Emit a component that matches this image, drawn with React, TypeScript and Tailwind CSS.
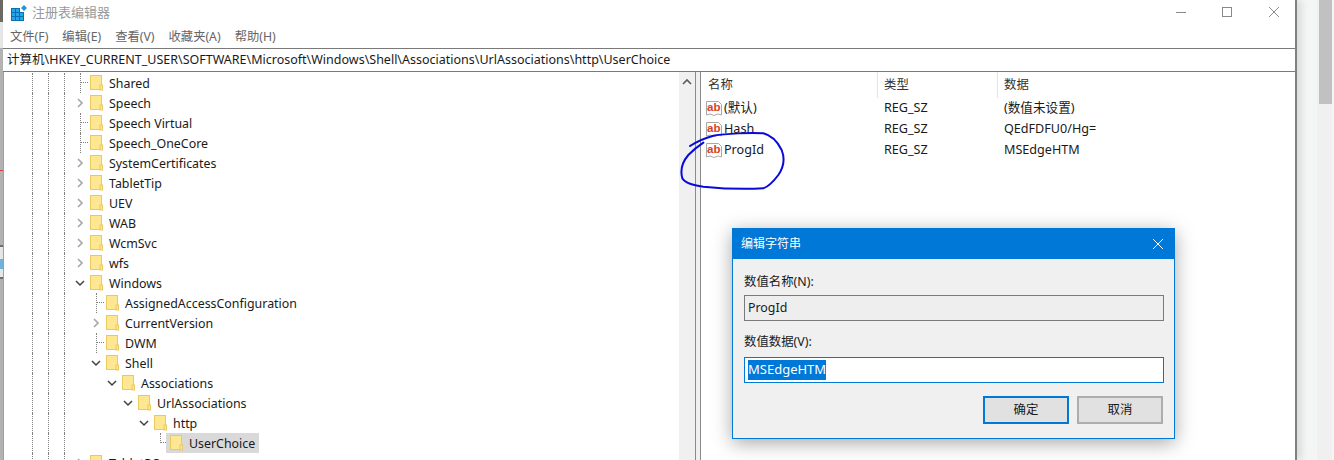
const F = '"Noto Sans","Noto Sans CJK SC",sans-serif';

type Row = { t: string; g: number[]; e?: 'r' | 'd' | 'n' | 'l'; sel?: boolean };

const rows: Row[] = [
  { t: 'Shared', g: [1, 1, 1], e: 'n' },
  { t: 'Speech', g: [1, 1, 1], e: 'r' },
  { t: 'Speech Virtual', g: [1, 1, 1], e: 'n' },
  { t: 'Speech_OneCore', g: [1, 1, 1], e: 'n' },
  { t: 'SystemCertificates', g: [1, 1, 1], e: 'r' },
  { t: 'TabletTip', g: [1, 1, 1], e: 'r' },
  { t: 'UEV', g: [1, 1, 1], e: 'r' },
  { t: 'WAB', g: [1, 1, 1], e: 'r' },
  { t: 'WcmSvc', g: [1, 1, 1], e: 'r' },
  { t: 'wfs', g: [1, 1, 1], e: 'r' },
  { t: 'Windows', g: [1, 1, 1], e: 'd' },
  { t: 'AssignedAccessConfiguration', g: [1, 1, 1, 0], e: 'n' },
  { t: 'CurrentVersion', g: [1, 1, 1, 0], e: 'r' },
  { t: 'DWM', g: [1, 1, 1, 0], e: 'n' },
  { t: 'Shell', g: [1, 1, 1, 0], e: 'd' },
  { t: 'Associations', g: [1, 1, 1, 0, 0], e: 'd' },
  { t: 'UrlAssociations', g: [1, 1, 1, 0, 0, 0], e: 'd' },
  { t: 'http', g: [1, 1, 1, 0, 0, 0, 0], e: 'd' },
  { t: 'UserChoice', g: [1, 1, 1, 0, 0, 0, 0, 0], e: 'l', sel: true },
  { t: 'TabletPC', g: [1, 1, 1], e: 'r' },
];

function Folder() {
  return (
    <svg width="13" height="16" viewBox="0 0 13 16" className="shrink-0">
      <rect x="0.5" y="0.5" width="11" height="14" fill="#fde792" stroke="#ecc95f" />
      <rect x="10" y="10" width="2.5" height="5" fill="#fde792" stroke="#ecc95f" />
    </svg>
  );
}

function Expander({ e }: { e?: Row['e'] }) {
  if (e === 'r')
    return (
      <svg width="16" height="20" viewBox="0 0 16 20" className="shrink-0">
        <path d="M6 6 L10 10 L6 14" fill="none" stroke="#a6a6a6" strokeWidth="1.6" />
      </svg>
    );
  if (e === 'd')
    return (
      <svg width="16" height="20" viewBox="0 0 16 20" className="shrink-0">
        <path d="M4 8 L8 12 L12 8" fill="none" stroke="#404040" strokeWidth="1.5" />
      </svg>
    );
  return (
    <div className="w-4 h-5 shrink-0 pl-2">
      <div className={`w-2 border-l border-dotted border-[#808080] ${e === 'l' ? 'h-[10px]' : 'h-5'}`}>
        <div className="h-[10px] border-b border-dotted border-[#808080]" />
      </div>
    </div>
  );
}

function TreeRow({ r }: { r: Row }) {
  return (
    <div className="flex items-center h-5 shrink-0">
      {r.g.map((on, i) => (
        <div key={i} className="w-4 h-5 shrink-0 pl-2">
          {on ? <div className="h-5 border-l border-dotted border-[#808080]" /> : null}
        </div>
      ))}
      <Expander e={r.e} />
      <div className={`flex items-center h-5 pr-[4px] ${r.sel ? 'bg-[#d9d9d9] -ml-[2px] pl-[4px]' : 'pl-[2px]'}`}>
        <Folder />
        <span className="ml-[6px] pt-[2px] text-[12.4px] text-[#1a1a1a] leading-5 whitespace-nowrap">{r.t}</span>
      </div>
    </div>
  );
}

function AbIcon() {
  return (
    <svg width="16" height="17" viewBox="0 0 16 17" className="shrink-0">
      <path d="M0.5 1.5 H12.5 L15.5 4.5 V15 L12 14 L8 15.5 L4 14 L0.5 15 Z" fill="#fff" stroke="#a8a8a8" />
      <text x="1" y="10.5" fontSize="11.5" fontWeight="700" fill="#d8431f" fontFamily="Liberation Sans, sans-serif">ab</text>
    </svg>
  );
}

function ValueRow({ n, d }: { n: string; d: string }) {
  return (
    <div className="flex items-center h-[21px] text-[12.6px] text-[#1a1a1a]">
      <div className="w-[178px] flex items-center pl-[5px] gap-[2px] shrink-0">
        <AbIcon />
        <span>{n}</span>
      </div>
      <div className="w-[120px] pl-[5px] shrink-0">REG_SZ</div>
      <div className="pl-[5px]">{d}</div>
    </div>
  );
}

function Dialog() {
  return (
    <div className="absolute left-[732px] top-[228px] w-[443px] h-[211px] bg-[#f0f0f0] border border-[#0078d7] shadow-[0_4px_18px_rgba(0,0,0,0.35)] flex flex-col text-[12.4px] text-[#1a1a1a]">
      <div className="h-[30px] bg-[#0078d7] flex items-center justify-between pl-2 pr-[10px] shrink-0 text-white">
        <span className="text-[12px]">编辑字符串</span>
        <svg width="12" height="12" viewBox="0 0 12 12">
          <path d="M1 1 L11 11 M11 1 L1 11" stroke="#fff" strokeWidth="1" />
        </svg>
      </div>
      <div className="flex flex-col px-[11px] flex-1">
        <div className="h-[19px] mt-[13px] leading-[19px]">数值名称(N):</div>
        <div className="h-[26px] mt-[4px] w-[420px] border border-[#7a7a7a] bg-[#eeeeee] pl-[3px] leading-[23px]">ProgId</div>
        <div className="h-[19px] mt-[11px] leading-[19px]">数值数据(V):</div>
        <div className="h-[26px] mt-[6px] w-[420px] border border-[#0078d7] bg-white pl-[3px] pt-[2px]">
          <span className="inline-block bg-[#0078d7] text-white text-[13px] h-[20px] leading-[19px]">MSEdgeHTM</span>
        </div>
        <div className="flex justify-end gap-2 mt-[13px] w-[419px]">
          <div className="w-[86px] h-[28px] border-2 border-[#0078d7] bg-[#e1e1e1] flex items-center justify-center">确定</div>
          <div className="w-[86px] h-[28px] border-2 border-[#adadad] bg-[#e1e1e1] flex items-center justify-center">取消</div>
        </div>
      </div>
    </div>
  );
}

export default function App() {
  return (
    <div className="relative w-[1334px] h-[460px] overflow-hidden bg-[#f4f5f5] flex" style={{ fontFamily: F }}>
      <div className="w-[3px] h-full shrink-0 bg-[#b4b4b4] flex flex-col">
        <div className="h-[22px] bg-[#6b6b63]" />
        <div className="h-[26px] bg-[#e8e8e8]" />
        <div className="h-[122px]" />
        <div className="h-px bg-[#d94040]" />
        <div className="h-[74px]" />
        <div className="h-[2px] bg-[#707070]" />
        <div className="h-[12px] bg-[#e8e8e8]" />
        <div className="h-[10px] bg-[#6db5dd]" />
        <div className="h-[8px] bg-[#e8e8e8]" />
        <div className="h-[2px] bg-[#707070]" />
      </div>
      <div className="w-[1294px] h-full shrink-0 bg-white border-r-2 border-[#808080] flex flex-col shadow-[4px_0_8px_rgba(0,0,0,0.12)]">
        <div className="h-[26px] flex items-center shrink-0 pl-[8px] justify-between">
          <div className="flex items-center gap-[5px]">
            <svg width="16" height="16" viewBox="0 0 16 16">
              <rect x="0" y="3" width="13" height="13" fill="#0a6fb5" />
              <path d="M1 4 H4 V7 H1 Z M5 4 H8 V7 H5 Z M1 8 H4 V11 H1 Z M5 8 H8 V11 H5 Z M9 8 H12 V11 H9 Z M1 12 H4 V15 H1 Z M5 12 H8 V15 H5 Z M9 12 H12 V15 H9 Z" fill="#22a8e6" />
              <rect x="9" y="3" width="4" height="4" fill="#ffffff" />
              <path d="M13 0 L16 3 L13 6 L10 3 Z" fill="#1f9ad6" />
            </svg>
            <span className="text-[13px] text-[#9a9a9a]">注册表编辑器</span>
          </div>
          <div className="flex items-center pr-[15px] gap-[36px] mb-[2px]">
            <div className="w-[10px] h-px bg-[#8a8a8a]" />
            <div className="w-[10px] h-[10px] border border-[#8a8a8a]" />
            <svg width="12" height="12" viewBox="0 0 12 12">
              <path d="M1 1 L11 11 M11 1 L1 11" stroke="#8a8a8a" strokeWidth="1" />
            </svg>
          </div>
        </div>
        <div className="h-[22px] bg-white flex items-center gap-[14px] pl-[7px] text-[12.3px] text-[#666666] shrink-0">
          <span>文件(F)</span>
          <span>编辑(E)</span>
          <span>查看(V)</span>
          <span>收藏夹(A)</span>
          <span>帮助(H)</span>
        </div>
        <div className="h-[24px] border-y border-[#7a7a7a] flex items-center pl-[4px] text-[12.5px] text-[#1a1a1a] shrink-0">
          计算机\HKEY_CURRENT_USER\SOFTWARE\Microsoft\Windows\Shell\Associations\UrlAssociations\http\UserChoice
        </div>
        <div className="flex flex-1 min-h-0">
          <div className="w-[676px] shrink-0 overflow-hidden flex flex-col pl-[20px] border-l border-[#a0a0a0] pt-px">
            {rows.map((r) => (
              <TreeRow key={r.t} r={r} />
            ))}
          </div>
          <div className="w-[16px] bg-[#f0f0f0] shrink-0 flex justify-center pt-[6px]">
            <svg width="10" height="8" viewBox="0 0 10 8">
              <path d="M1 6 L5 2 L9 6" fill="none" stroke="#5a5a5a" strokeWidth="1.6" />
            </svg>
          </div>
          <div className="w-[5px] bg-[#f0f0f0] border-l border-[#8a8a8a] shrink-0" />
          <div className="flex-1 border-l border-[#8a8a8a] bg-white flex flex-col min-w-0">
            <div className="h-[26px] flex items-stretch text-[12.4px] text-[#333333] shrink-0">
              <div className="w-[177px] border-r border-[#e5e5e5] pl-[7px] flex items-center">名称</div>
              <div className="w-[120px] border-r border-[#e5e5e5] pl-[6px] flex items-center">类型</div>
              <div className="pl-[6px] flex items-center">数据</div>
            </div>
            <ValueRow n="(默认)" d="(数值未设置)" />
            <ValueRow n="Hash" d="QEdFDFU0/Hg=" />
            <ValueRow n="ProgId" d="MSEdgeHTM" />
          </div>
        </div>
      </div>
      <div className="flex-1 flex justify-end pr-[2px]">
        <div className="w-[15px] bg-[#f0f0f0] h-full pl-[2px]">
          <div className="h-[104px] bg-[#c1c1c1]" />
        </div>
      </div>
      <svg width="240" height="130" viewBox="0 0 720 390" className="absolute left-[670px] top-[70px]">
        <path
          d="M60 228 C80 215 100 205 130 197 C170 190 240 188 280 190 C300 195 320 210 335 240 C345 265 342 290 325 315 C310 335 295 350 280 355 C230 358 150 355 100 350 C70 345 45 340 37 325 C30 300 38 275 55 255 C70 240 85 228 100 218"
          fill="none"
          stroke="#0a0ad8"
          strokeWidth="6"
          strokeLinecap="round"
        />
      </svg>
      <Dialog />
    </div>
  );
}
